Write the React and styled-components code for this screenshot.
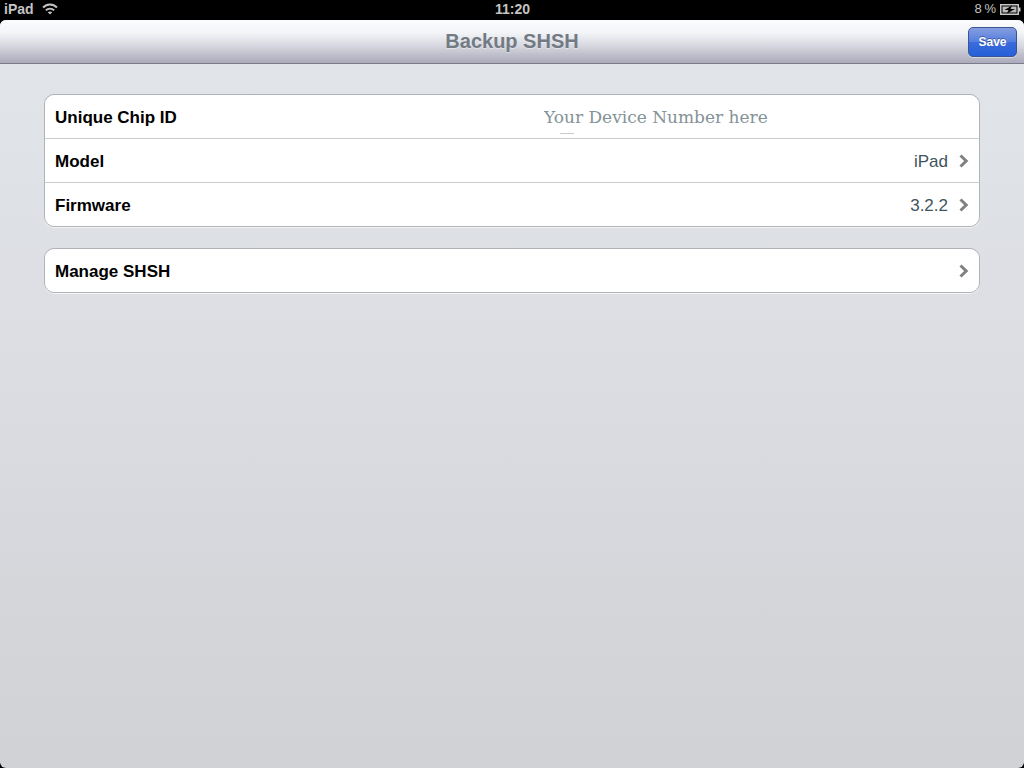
import React, { useState } from 'react';
import styled, { createGlobalStyle } from 'styled-components';

const GlobalStyle = createGlobalStyle`
  * {
    box-sizing: border-box;
  }
  body {
    margin: 0;
    background: #000;
    font-family: 'Liberation Sans', Arial, sans-serif;
  }
  button,
  input {
    font-family: inherit;
    margin: 0;
  }
`;

const Chevron = () => (
  <ChevronIcon viewBox="0 0 10 14" aria-hidden="true">
    <path d="M1.5 1.5 L7.2 7 L1.5 12.5" />
  </ChevronIcon>
);

const WifiIcon = () => (
  <svg width="16" height="12" viewBox="0 0 16 12" fill="none" aria-hidden="true">
    <path d="M1 4.5 C5 0.4 11 0.4 15 4.5" stroke="#c4c4c4" strokeWidth="2" />
    <path d="M3.8 7.4 C6.2 5 9.8 5 12.2 7.4" stroke="#c4c4c4" strokeWidth="1.9" />
    <path d="M8 11.6 L5.8 9.3 C7 8.2 9 8.2 10.2 9.3 Z" fill="#c4c4c4" />
  </svg>
);

const BatteryIcon = () => (
  <svg width="21" height="11" viewBox="0 0 21 11" aria-hidden="true">
    <rect x="0.75" y="0.75" width="17.5" height="9.5" fill="#000" stroke="#c8c8c8" strokeWidth="1.5" />
    <rect x="2.5" y="2.5" width="14" height="6" fill="#b9b9b9" />
    <path d="M19 3.5 H20.5 V7.5 H19 Z" fill="#c8c8c8" />
    <path d="M12 1.5 L4.5 6 H8.5 L7 9.5 L15 5 H10.5 Z" fill="#000" />
  </svg>
);

const App = () => {
  const [chipId, setChipId] = useState('Your Device Number here');

  return (
    <Device>
      <GlobalStyle />
      <StatusBar>
        <StatusItem>
          iPad
          <WifiIcon />
        </StatusItem>
        <Clock>11:20</Clock>
        <StatusItem $end>
          <Percent>8{'\u2009'}%</Percent>
          <BatteryIcon />
        </StatusItem>
      </StatusBar>
      <Screen>
        <NavBar>
          <Title>Backup SHSH</Title>
          <SaveButton type="button">Save</SaveButton>
        </NavBar>
        <Content>
          <Group>
            <FieldRow>
              <FieldLabel htmlFor="chip-id">Unique Chip ID</FieldLabel>
              <Field>
                <FieldInput
                  id="chip-id"
                  type="text"
                  value={chipId}
                  onChange={(e) => setChipId(e.target.value)}
                />
              </Field>
            </FieldRow>
            <LinkRow type="button">
              <RowTitle>Model</RowTitle>
              <Value>iPad</Value>
              <Chevron />
            </LinkRow>
            <LinkRow type="button">
              <RowTitle>Firmware</RowTitle>
              <Value>3.2.2</Value>
              <Chevron />
            </LinkRow>
          </Group>
          <Group>
            <LinkRow type="button">
              <RowTitle>Manage SHSH</RowTitle>
              <Chevron />
            </LinkRow>
          </Group>
        </Content>
      </Screen>
    </Device>
  );
};

const Device = styled.div`
  display: flex;
  flex-direction: column;
  min-height: 100vh;
`;

const StatusBar = styled.header`
  display: grid;
  grid-template-columns: 1fr auto 1fr;
  align-items: center;
  height: 20px;
  padding: 0 3px 2px 4px;
  color: #c4c4c4;
  font-size: 14px;
  font-weight: 700;
  line-height: 18px;
`;

const StatusItem = styled.div`
  display: flex;
  align-items: center;
  justify-content: ${({ $end }) => ($end ? 'flex-end' : 'flex-start')};
  gap: ${({ $end }) => ($end ? '4px' : '8px')};
`;

const Percent = styled.span`
  font-size: 13px;
  font-weight: 400;
`;

const Clock = styled.time`
  font-size: 14px;
`;

const Screen = styled.div`
  flex: 1;
  border-radius: 6px;
  overflow: hidden;
  background: linear-gradient(#e2e6e9 0%, #dddfe4 35%, #d8dae0 62%, #d5d6da 75%, #d0d2d6 100%);
`;

const NavBar = styled.div`
  display: grid;
  grid-template-columns: 1fr auto 1fr;
  align-items: center;
  height: 44px;
  padding: 0 7px;
  border-bottom: 1px solid #7b7d8c;
  background: linear-gradient(#fbfcfd 0%, #f3f4f7 30%, #dcdde4 55%, #c0c0cd 80%, #aaaaba 100%);
`;

const Title = styled.h1`
  grid-column: 2;
  margin: 0;
  padding-bottom: 2px;
  color: #727a84;
  font-size: 20px;
  font-weight: 700;
  line-height: 24px;
  text-shadow: 0 1px 0 rgba(255, 255, 255, 0.4);
`;

const SaveButton = styled.button`
  justify-self: end;
  height: 30px;
  padding: 0 9px;
  min-width: 49px;
  border: 1px solid #3c5394;
  border-radius: 5px;
  background: linear-gradient(#869de0 0%, #5580df 48%, #3a6bdb 52%, #2560d8 100%);
  box-shadow: 0 1px 0 rgba(255, 255, 255, 0.4);
  color: #fff;
  font-size: 12px;
  font-weight: 700;
  text-shadow: 0 -1px 0 rgba(0, 0, 0, 0.35);
`;

const Content = styled.main`
  display: flex;
  flex-direction: column;
  gap: 21px;
  padding: 30px 44px;
`;

/* the 1px gaps let the background through as row dividers */
const Group = styled.section`
  display: grid;
  gap: 1px;
  border: 1px solid #b0b3b8;
  border-radius: 10px;
  overflow: hidden;
  background: #c9cbce;
  box-shadow: 0 1px 0 #f4f5f7;
`;

const FieldRow = styled.div`
  display: grid;
  grid-template-columns: 1fr 1fr;
  align-items: center;
  height: 43px;
  padding: 0 10px;
  background: #fff;
`;

const FieldLabel = styled.label`
  padding-top: 2px;
  font-size: 17px;
  font-weight: 700;
  line-height: 20px;
`;

const Field = styled.div`
  position: relative;
  padding-left: 32px;
  &::after {
    content: '';
    position: absolute;
    left: 48px;
    bottom: -6px;
    width: 14px;
    height: 1px;
    background: #c9cbce;
  }
`;

const FieldInput = styled.input`
  display: block;
  width: 100%;
  height: 22px;
  padding: 0;
  border: none;
  outline: none;
  background: transparent;
  color: #859298;
  font-family: 'DejaVu Serif', serif;
  font-size: 17px;
`;

const LinkRow = styled.button`
  display: flex;
  align-items: center;
  justify-content: space-between;
  width: 100%;
  height: 43px;
  padding: 0 10px;
  border: none;
  background: #fff;
  color: #000;
  font-size: 17px;
  line-height: 20px;
  text-align: left;
  cursor: pointer;
`;

const RowTitle = styled.span`
  padding-top: 2px;
  font-weight: 700;
`;

const Value = styled.span`
  flex: 1;
  padding: 2px 11px 0 0;
  color: #40545e;
  text-align: right;
`;

const ChevronIcon = styled.svg`
  width: 10px;
  height: 14px;
  fill: none;
  stroke: #808080;
  stroke-width: 3;
`;

export default App;
